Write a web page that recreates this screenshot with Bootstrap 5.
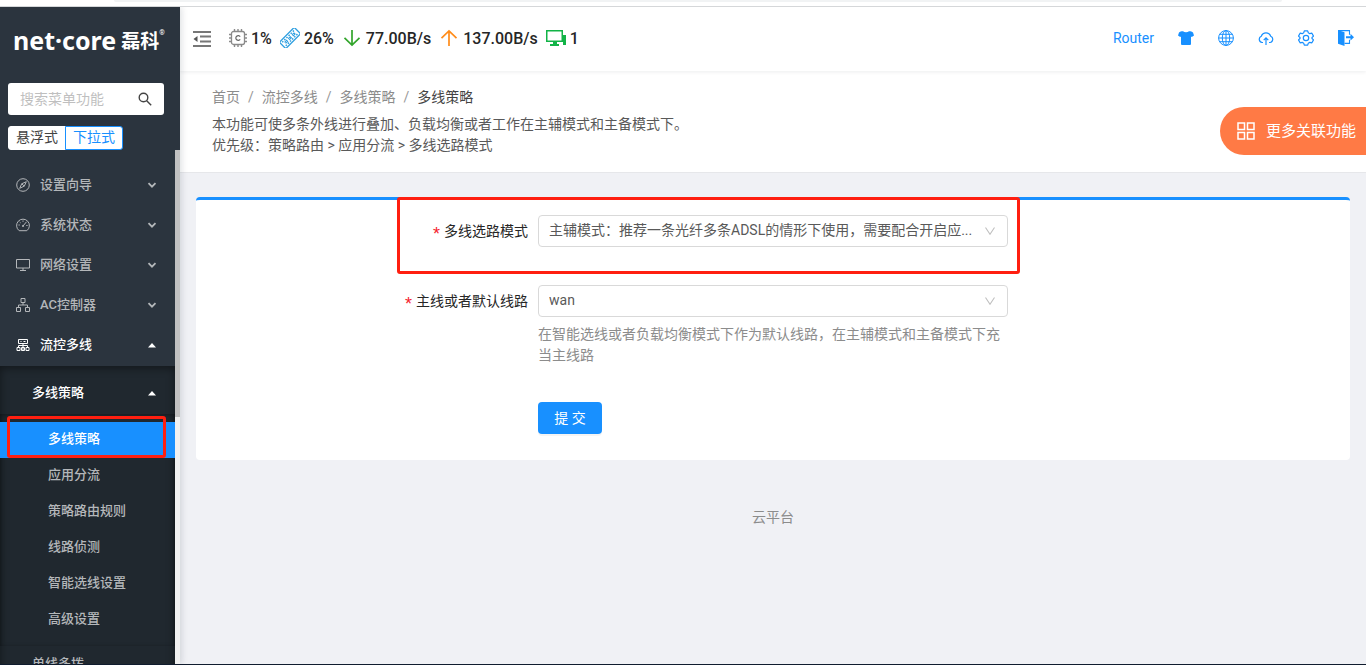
<!DOCTYPE html>
<html lang="zh-CN">
<head>
<meta charset="utf-8">
<meta name="viewport" content="width=device-width, initial-scale=1">
<title>多线策略</title>
<link href="https://cdn.jsdelivr.net/npm/bootstrap@5.3.0/dist/css/bootstrap.min.css" rel="stylesheet">
<style>
:root { --brand: #1890ff; --alert: #ff1f10; }
body { font-family: Roboto, "Noto Sans CJK SC", sans-serif; font-size: 14px; line-height: 21px; color: #595959; background: #f0f1f5; }
svg { display: block; flex: none; }
a { text-decoration: none; }

/* browser edge above and below the page */
.browser-edge { height: 7px; border-bottom: 1px solid #d5d7d9; background: #fff; padding: 0 84px 0 114px; }
.address-pill { height: 2px; background: #f1f3f4; border-radius: 0 0 8px 8px; }
.task-edge { height: 1px; background: #101c2e; }

/* sidebar */
.sidebar { width: 180px; flex: none; background: #2b343e; box-shadow: 2px 0 6px rgba(0,21,41,.12); z-index: 2; }
.brand { height: 76px; padding: 0 0 10px 13px; color: #fff; }
.brand-latin { font: 700 26px/32px "Noto Sans", "Open Sans", sans-serif; }
.brand-latin { font-size: 25px; }
.brand-han { font: 700 19px/32px "Noto Sans CJK SC", sans-serif; margin-left: 5px; }
.brand-reg { font-size: 7px; line-height: 36px; }
.menu-search { margin: 0 16px 0 8px; height: 32px; background: #fff; border-radius: 3px; padding: 0 12px; color: #444; }
.menu-search input { font-size: 14px; min-width: 0; color: #444; background: none; outline: 0; }
.menu-search input::placeholder { color: #bfbfbf; opacity: 1; }
.mode-switch { margin: 11px 0 0 8px; }
.mode-switch .btn { font-size: 14px; line-height: 20px; height: 24px; padding: 0 7px 2px; border-radius: 3px; background: #fff; border: 1px solid #fff; color: #444; }
.mode-switch .btn.active { border-color: var(--brand); color: var(--brand); background: #fff; }
.menu { font-size: 13px; line-height: 20px; }
.menu a { color: #b4b7ba; font-weight: 500; }
.menu a.open, .menu a.current { color: #fff; }
.menu-top { padding-top: 15px; }
.menu-top > a { height: 40px; padding: 0 18px 0 16px; gap: 10px; }
.sub { background: #20282f; box-shadow: inset 0 2px 8px rgba(0,0,0,.45); margin-top: 1px; }
.sub-head { height: 40px; padding: 0 18px 0 32px; }
.sub > .sub-head:first-child { margin-top: 7px; }
.leafs { padding: 8px 0; margin-top: 1px; box-shadow: inset 0 1px 4px rgba(0,0,0,.35); }
.leafs a { height: 36px; padding: 0 0 2px 48px; position: relative; }
.leafs a.current { background: var(--brand); }
.leafs a.current::after { content: ""; position: absolute; top: -6px; right: 9px; bottom: 0; left: 7px; border: 3px solid var(--alert); border-radius: 3px; }
.scroll-track { width: 5px; flex: none; background: #f1f1f1; }
.scroll-thumb { height: 52%; background: #c1c1c1; }

/* header */
.topbar { height: 64px; background: #fff; padding: 0 12px 0 13px; box-shadow: 0 1px 4px rgba(0,21,41,.08); z-index: 1; }
.stats { font-size: 16px; font-weight: 500; color: #262626; gap: 8px; margin-left: 18px; }
.stats span { gap: 4px; }
.stats, .tools { padding-bottom: 2px; }
.tools { gap: 24px; }
.tools a { color: var(--brand); }

.page-head { background: #fff; padding: 16px 32px 16px; height: 102px; border-bottom: 1px solid #e6e7ea; }
.page-head .breadcrumb { --bs-breadcrumb-divider-color: #999; --bs-breadcrumb-item-padding-x: 8px; margin-bottom: 6px; }
.page-head .breadcrumb a { color: #8c8c8c; }
.page-head .breadcrumb .active { color: #444; }
.related { position: absolute; right: 0; top: 36px; height: 48px; padding: 0 10px 0 17px; gap: 11px; border: 0; border-radius: 24px 0 0 24px; background: #ff7a45; color: #fff; font-size: 15px; }

/* form panel */
.panel { margin: 24px 16px 0; padding: 15px 13px 26px; border-top: 3px solid var(--brand); border-radius: 4px; background: #fff; }
.field { position: relative; }
.field + .field { margin-top: 38px; }
.field-label { width: calc(100% * 7 / 24); padding-right: 10px; text-align: right; line-height: 32px; color: #262626; }
.field-label b { color: #f5222d; font: 18px/20px "Liberation Sans", sans-serif; margin-right: 4px; vertical-align: -4px; }
.field-control { width: calc(100% * 10 / 24); }
.form-select { height: 32px; padding: 0 34px 2px 10px; font-size: 14px; line-height: 28px; border-color: #d9d9d9; border-radius: 4px; color: #595959; background-position: right 11px center; background-size: 12px 12px;
  background-image: url("data:image/svg+xml,%3Csvg xmlns='http://www.w3.org/2000/svg' viewBox='0 0 12 12'%3E%3Cpath d='M1.5 2.5 6 9.300l4.500-6.800' fill='none' stroke='%23bfbfbf' stroke-width='1.100'/%3E%3C/svg%3E"); }
.hint { color: #8c8c8c; margin-top: 7px; }
.marked { position: absolute; top: -18px; bottom: -27px; left: calc(100% * 7 / 24 - 141px); right: calc(100% * 7 / 24 - 12px); border: 3px solid var(--alert); border-radius: 3px; pointer-events: none; }
.btn-submit { width: 64px; height: 32px; margin-top: 36px; padding: 0; font-size: 14px; line-height: 30px; border-radius: 4px; background: var(--brand); border: 0; color: #fff; word-spacing: normal; box-shadow: 0 2px 0 rgba(0,0,0,.045); }
.foot { margin-top: 47px; }
.foot a { color: #8c8c8c; }
</style>
</head>
<body class="vh-100 d-flex flex-column overflow-hidden">
<svg class="d-none">
  <symbol id="down" viewBox="0 0 10 10"><path d="M1.500 3.200 5 6.700l3.500-3.500" fill="none" stroke="currentColor" stroke-width="1.800"/></symbol>
  <symbol id="up" viewBox="0 0 10 10"><path d="M1 7.500 5 3l4 4.500z" fill="currentColor"/></symbol>
</svg>
<div class="browser-edge flex-shrink-0"><div class="address-pill"></div></div>

<div class="d-flex flex-grow-1 overflow-hidden">
  <aside class="sidebar d-flex flex-column">
    <div class="brand d-flex align-items-center flex-shrink-0">
      <span class="brand-latin">net·core</span><span class="brand-han">磊科</span><span class="brand-reg align-self-start pt-2">®</span>
    </div>
    <div class="menu-search d-flex align-items-center flex-shrink-0">
      <input class="border-0 p-0 flex-grow-1" type="text" placeholder="搜索菜单功能" aria-label="搜索菜单功能">
      <svg width="14" height="14" viewBox="0 0 14 14" fill="none" stroke="currentColor" stroke-width="1.400"><circle cx="5.500" cy="5.500" r="4.300"/><path d="m8.700 8.700 4.500 4.500"/></svg>
    </div>
    <div class="mode-switch btn-group align-self-start flex-shrink-0">
      <button type="button" class="btn">悬浮式</button>
      <button type="button" class="btn active">下拉式</button>
    </div>

    <div class="d-flex flex-grow-1 overflow-hidden">
      <nav class="menu flex-grow-1 overflow-hidden">
        <div class="menu-top">
          <a href="#" class="d-flex align-items-center">
            <svg width="14" height="14" viewBox="0 0 14 14" fill="none" stroke="currentColor"><circle cx="7" cy="7" r="6.300"/><path d="m10.300 3.700-2 4.400-4.600 2.200 2-4.500zM5.700 5.800l2.600 2.300"/></svg>
            <span class="flex-grow-1">设置向导</span><svg width="10" height="10"><use href="#down"/></svg></a>
          <a href="#" class="d-flex align-items-center">
            <svg width="14" height="14" viewBox="0 0 14 14" fill="none" stroke="currentColor"><path d="M3.200 12.700a6.400 6.400 0 1 1 7.600 0z"/><path d="M7 2.500v1.300M2.500 7h1.300M10.300 7.500h1.300M3.700 4l.9.800M10.500 3.800 7 8"/><circle cx="7" cy="8" r=".7"/></svg>
            <span class="flex-grow-1">系统状态</span><svg width="10" height="10"><use href="#down"/></svg></a>
          <a href="#" class="d-flex align-items-center">
            <svg width="14" height="14" viewBox="0 0 14 14" fill="none" stroke="currentColor"><path d="M.5 1.500h13v8.500H.5zM7 10v2.500M4 12.500h6"/></svg>
            <span class="flex-grow-1">网络设置</span><svg width="10" height="10"><use href="#down"/></svg></a>
          <a href="#" class="d-flex align-items-center">
            <svg width="14" height="14" viewBox="0 0 14 14" fill="none" stroke="currentColor"><path d="M5 .5h4v4H5zM.5 9.500h4v4h-4zM9.500 9.500h4v4h-4zM7 4.500V7M2.500 9.500V7h9v2.500"/></svg>
            <span class="flex-grow-1">AC控制器</span><svg width="10" height="10"><use href="#down"/></svg></a>
          <a href="#" class="d-flex align-items-center open">
            <svg width="14" height="14" viewBox="0 0 14 14" fill="none" stroke="currentColor"><path d="M2.500 1.500h9v4h-9zM4.500 3.500h1M7.500 3.500h2M7 5.500v7M2.500 9.500V7.500h9v2M1 9.500h3v3H1zM5.500 9.500h3v3h-3zM10 9.500h3v3h-3z"/></svg>
            <span class="flex-grow-1">流控多线</span><svg width="10" height="10"><use href="#up"/></svg></a>
        </div>
        <div class="sub d-flow-root overflow-hidden">
          <a href="#" class="sub-head d-flex align-items-center open"><span class="flex-grow-1">多线策略</span><svg width="10" height="10"><use href="#up"/></svg></a>
          <div class="leafs">
            <a href="#" class="d-flex align-items-center current" aria-current="page">多线策略</a>
            <a href="#" class="d-flex align-items-center">应用分流</a>
            <a href="#" class="d-flex align-items-center">策略路由规则</a>
            <a href="#" class="d-flex align-items-center">线路侦测</a>
            <a href="#" class="d-flex align-items-center">智能选线设置</a>
            <a href="#" class="d-flex align-items-center">高级设置</a>
          </div>
          <a href="#" class="sub-head d-flex align-items-center pb-1">单线多拨</a>
        </div>
      </nav>
      <div class="scroll-track"><div class="scroll-thumb"></div></div>
    </div>
  </aside>

  <div class="d-flex flex-column flex-grow-1 position-relative">
    <header class="topbar d-flex align-items-center flex-shrink-0">
      <svg width="18" height="18" viewBox="0 0 18 18" stroke="#777" stroke-width="2"><path d="M0 2h18M7 6.500h11M7 11.500h11M0 16h18"/><path d="M4.500 6v6L.5 9z" fill="#555" stroke="none"/></svg>
      <div class="stats d-flex align-items-center">
        <span class="d-flex align-items-center"><svg width="18" height="18" viewBox="0 0 18 18" fill="none" stroke="#8a8a8a"><rect x="2.500" y="2.500" width="13" height="13" rx="2" stroke-width="1.300"/><path d="M5.500 0v2M9 0v2M12.500 0v2M5.500 16v2M9 16v2M12.500 16v2M0 5.500h2M0 9h2M0 12.500h2M16 5.500h2M16 9h2M16 12.500h2" stroke-width="1.400"/><path d="M11.200 7.600a2.400 2.400 0 1 0 0 2.800" stroke="#666" stroke-width="1.200"/></svg>1%</span>
        <span class="d-flex align-items-center"><svg width="20" height="20" viewBox="0 0 20 20" fill="none" stroke="#2f9fe0"><g transform="rotate(-45 10 10)"><rect x="-.5" y="5.500" width="21" height="9" rx="1" stroke-width="1.400"/><path d="M1.500 7.500h17M1.500 12.500h17" stroke-width="1.500" stroke-dasharray="1.500 1.500"/><path d="M3.500 9.200h2.500v1.600H3.500zM8.700 9.200h2.500v1.600H8.700zM14 9.200h2.500v1.600H14z"/></g></svg>26%</span>
        <span class="d-flex align-items-center"><svg width="20" height="20" viewBox="0 0 20 20" fill="none" stroke="#33a52c" stroke-width="1.700"><path d="M10 2v15M2.500 9.800 10 17l7.500-7.200"/></svg>77.00B/s</span>
        <span class="d-flex align-items-center"><svg width="20" height="20" viewBox="0 0 20 20" fill="none" stroke="#ff8c1a" stroke-width="1.700"><path d="M10 18V3M2.500 10.200 10 3l7.500 7.200"/></svg>137.00B/s</span>
        <span class="d-flex align-items-center"><svg width="20" height="20" viewBox="0 0 20 20" fill="#12b347"><path d="M0 2h17v12H0zm1.500 1.500v9h14v-9z" fill-rule="evenodd"/><path d="M7 14h4v2h2v2H4v-2h3zM17 7h3v10h-3z"/></svg>1</span>
      </div>
      <div class="tools d-flex align-items-center ms-auto">
        <a href="#">Router</a>
        <a href="#" aria-label="主题"><svg width="16" height="16" viewBox="0 0 16 16" fill="currentColor"><path d="M5 1.200c1.500 1.500 4.500 1.500 6 0 1.700 0 3.200.2 4 1.400l1 3-2.200 1.300-.8-.4V14q0 1-1 1H4q-1 0-1-1V6.500l-.8.4L0 5.600l1-3c.8-1.200 2.300-1.400 4-1.400z"/></svg></a>
        <a href="#" aria-label="语言"><svg width="16" height="16" viewBox="0 0 16 16" fill="none" stroke="currentColor"><circle cx="8" cy="8" r="7.400"/><ellipse cx="8" cy="8" rx="3.700" ry="7.400"/><path d="M8 .6v14.800M.6 8h14.800M1.700 4.300h12.600M1.700 11.700h12.600"/></svg></a>
        <a href="#" aria-label="云"><svg width="16" height="16" viewBox="0 0 16 16" fill="none" stroke="currentColor" stroke-width="1.200"><path d="M5 12.500H4a3.300 3.300 0 0 1-.7-6.300 5 5 0 0 1 9.400 0 3.300 3.300 0 0 1-.7 6.300h-1M8 15V8M5.700 10.200 8 7.800l2.300 2.400"/></svg></a>
        <a href="#" aria-label="设置"><svg width="16" height="16" viewBox="0 0 16 16" fill="none" stroke="currentColor" stroke-width="1.200" stroke-linejoin="round"><path d="M6.300.8h3.400l.6 2 1.500.9 2.100-.5 1.600 2.900L14 7.500v1l1.500 1.400-1.600 2.900-2.100-.5-1.500.9-.6 2H6.300l-.6-2-1.500-.9-2.100.5L.5 9.900 2 8.500v-1L.5 6.100l1.600-2.900 2.100.5 1.500-.9z"/><circle cx="8" cy="8" r="2.700"/></svg></a>
        <a href="#" aria-label="退出"><svg width="16" height="16" viewBox="0 0 16 16" fill="currentColor"><path d="M0 0 6.500 2.300V16L0 13.800z"/><path d="M0 .6h11.500v4.200M6.500 13.400h5V9.800" fill="none" stroke="currentColor" stroke-width="1.100"/><path d="M8 6.300h4.500V3.800L16 7.200l-3.500 3.400V8.200H8z"/></svg></a>
      </div>
    </header>

    <section class="page-head position-relative flex-shrink-0">
      <ol class="breadcrumb">
        <li class="breadcrumb-item"><a href="#">首页</a></li>
        <li class="breadcrumb-item"><a href="#">流控多线</a></li>
        <li class="breadcrumb-item"><a href="#">多线策略</a></li>
        <li class="breadcrumb-item active" aria-current="page">多线策略</li>
      </ol>
      <div>本功能可使多条外线进行叠加、负载均衡或者工作在主辅模式和主备模式下。</div>
      <div>优先级：策略路由 &gt; 应用分流 &gt; 多线选路模式</div>
      <button type="button" class="related d-flex align-items-center">
        <svg width="18" height="18" viewBox="0 0 18 18" fill="none" stroke="#fff" stroke-width="1.500"><path d="M1 1h6.500v6.500H1zM10.500 1H17v6.500h-6.500zM1 10.500h6.500V17H1zM10.500 10.500H17V17h-6.500z"/></svg>
        更多关联功能
      </button>
    </section>

    <main class="flex-grow-1">
      <form class="panel">
        <div class="field d-flex">
          <label class="field-label" for="mode"><b>*</b>多线选路模式</label>
          <div class="field-control">
            <select id="mode" class="form-select"><option>主辅模式：推荐一条光纤多条ADSL的情形下使用，需要配合开启应...</option></select>
          </div>
          <div class="marked"></div>
        </div>
        <div class="field d-flex">
          <label class="field-label" for="line"><b>*</b>主线或者默认线路</label>
          <div class="field-control">
            <select id="line" class="form-select"><option>wan</option></select>
            <div class="hint">在智能选线或者负载均衡模式下作为默认线路，在主辅模式和主备模式下充当主线路</div>
            <button type="button" class="btn-submit">提 交</button>
          </div>
        </div>
      </form>
      <div class="foot text-center"><a href="#">云平台</a></div>
    </main>
  </div>
</div>
<div class="task-edge flex-shrink-0"></div>
<script src="https://cdn.jsdelivr.net/npm/bootstrap@5.3.0/dist/js/bootstrap.bundle.min.js"></script>
</body>
</html>
